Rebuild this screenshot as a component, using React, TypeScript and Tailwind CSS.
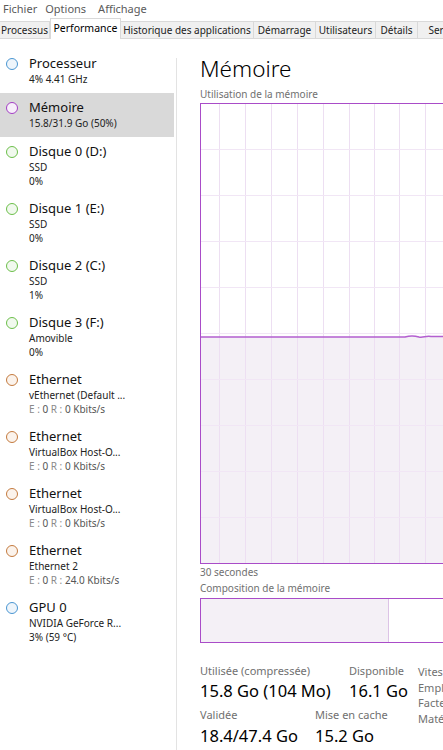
import React from "react"

type Item = { title: string, lines: React.ReactNode[], color: string, fill: string, selected?: boolean }

const Net = ({ e, r }: { e: string, r: string }) => (
    <span>
        <span className="text-[#8a8a8a]">E : </span><span className="text-[#555]">{e} </span>
        <span className="text-[#8a8a8a]">R : </span><span className="text-[#555]">{r}</span>
    </span>
)

const items: Item[] = [
    { title: "Processeur", lines: ["4% 4.41 GHz"], color: "#4a96d2", fill: "#eef5fb" },
    { title: "Mémoire", lines: ["15.8/31.9 Go (50%)"], color: "#a33fc4", fill: "#f7eefa", selected: true },
    { title: "Disque 0 (D:)", lines: ["SSD", "0%"], color: "#6cbf4a", fill: "#f1f9ee" },
    { title: "Disque 1 (E:)", lines: ["SSD", "0%"], color: "#6cbf4a", fill: "#f1f9ee" },
    { title: "Disque 2 (C:)", lines: ["SSD", "1%"], color: "#6cbf4a", fill: "#f1f9ee" },
    { title: "Disque 3 (F:)", lines: ["Amovible", "0%"], color: "#6cbf4a", fill: "#f1f9ee" },
    { title: "Ethernet", lines: ["vEthernet (Default ...", <Net e="0" r="0 Kbits/s" />], color: "#c47a3e", fill: "#fbf3ec" },
    { title: "Ethernet", lines: ["VirtualBox Host-O...", <Net e="0" r="0 Kbits/s" />], color: "#c47a3e", fill: "#fbf3ec" },
    { title: "Ethernet", lines: ["VirtualBox Host-O...", <Net e="0" r="0 Kbits/s" />], color: "#c47a3e", fill: "#fbf3ec" },
    { title: "Ethernet", lines: ["Ethernet 2", <Net e="0" r="24.0 Kbits/s" />], color: "#c47a3e", fill: "#fbf3ec" },
    { title: "GPU 0", lines: ["NVIDIA GeForce R...", "3% (59 °C)"], color: "#4a96d2", fill: "#eef5fb" },
]

const tabs = [
    { label: "Processus", w: "w-[50px]" },
    { label: "Performance", w: "w-[71px]", active: true },
    { label: "Historique des applications", w: "w-[133px]" },
    { label: "Démarrage", w: "w-[62px]" },
    { label: "Utilisateurs", w: "w-[60px]" },
    { label: "Détails", w: "w-[42px]" },
    { label: "Services", w: "w-[60px]" },
]

const Graph = () => {
    const vx = [19, 45, 71, 97, 123, 149, 174, 199, 225, 251]
    const hy = [46, 92, 138, 184, 230, 276, 322, 368, 414]
    return (
        <svg width="270" height="461" className="block">
            <rect x="0" y="234" width="270" height="227" fill="#f4f0f6" />
            {vx.map(x => <line key={x} x1={x + 0.5} y1="0" x2={x + 0.5} y2="461" stroke="#eddff2" strokeWidth="1" />)}
            {hy.map(y => <line key={y} x1="0" y1={y + 0.5} x2="270" y2={y + 0.5} stroke="#f1e6f5" strokeWidth="1" />)}
            <path d="M0 234 L205 234 C210 232.5 214 232.5 219 234 C223 235 226 232.5 231 233.5 L270 233.5" fill="none" stroke="#b35fd0" strokeWidth="1.5" />
            <rect x="0.5" y="0.5" width="300" height="460" fill="none" stroke="#a94cc8" strokeWidth="1" />
        </svg>
    )
}

export default function App() {
    return (
        <div className="w-[443px] h-[750px] overflow-hidden bg-white text-black" style={{ fontFamily: '"Noto Sans", "Open Sans", sans-serif' }}>
            <div className="h-[18px] flex items-center gap-[8px] pl-[3px] text-[11px] text-[#5a5a5a]">
                <span>Fichier</span>
                <span>Options</span>
                <span className="ml-[4px]">Affichage</span>
            </div>
            <div className="h-[21px] flex items-end border-b border-[#d9d9d9] whitespace-nowrap">
                {tabs.map(t => t.active ? (
                    <div key={t.label} className={`${t.w} shrink-0 h-[21px] -mb-px bg-white border border-b-0 border-[#d9d9d9] flex items-center justify-center text-[10.5px] text-black`}>{t.label}</div>
                ) : (
                    <div key={t.label} className={`${t.w} shrink-0 h-[17px] bg-[#f0f0f0] border border-b-0 border-l-0 border-[#d9d9d9] flex items-center justify-center text-[10px] text-[#222]`}>{t.label}</div>
                ))}
            </div>
            <div className="flex">
                <div className="w-[176px] shrink-0 pt-[10px]">
                    {items.map((it, i) => (
                        <div key={i} className={`flex pl-[6px] pt-[6px] ${it.lines.length === 1 ? "h-[44px]" : "h-[57px]"} w-[174px] ${it.selected ? "bg-[#d9d9d9]" : ""}`}>
                            <div className="h-[17px] flex items-center">
                                <div className="w-[12px] h-[12px] rounded-full border-[1.5px]" style={{ borderColor: it.color, background: it.fill }} />
                            </div>
                            <div className="ml-[11px] whitespace-nowrap">
                                <div className="text-[13px] leading-[17px] text-[#111]">{it.title}</div>
                                {it.lines.map((l, j) => (
                                    <div key={j} className="text-[10px] leading-[14px] text-[#222]">{l}</div>
                                ))}
                            </div>
                        </div>
                    ))}
                </div>
                <div className="w-px bg-[#e3e3e3] mt-[19px] h-[700px] shrink-0" />
                <div className="pl-[23px] flex-1 overflow-hidden">
                    <div className="text-[22.5px] leading-[30px] mt-[15px] text-black font-light">Mémoire</div>
                    <div className="text-[10px] leading-[14px] text-[#707070] mt-[3px] whitespace-nowrap">Utilisation de la mémoire</div>
                    <div className="mt-[2px]"><Graph /></div>
                    <div className="text-[10px] leading-[14px] text-[#707070] mt-[1px]">30 secondes</div>
                    <div className="text-[10px] leading-[14px] text-[#707070] mt-[2px] whitespace-nowrap">Composition de la mémoire</div>
                    <div className="mt-[3px] w-[300px] h-[45px] border border-[#a94cc8] flex">
                        <div className="w-[188px] h-full bg-[#f4f0f6] border-r border-[#dcc3e6]" />
                    </div>
                    <div className="flex mt-[21px] whitespace-nowrap">
                        <div className="w-[218px] shrink-0">
                            <div className="flex">
                                <div className="w-[149px] shrink-0">
                                    <div className="text-[11px] leading-[14px] text-[#707070]">Utilisée (compressée)</div>
                                    <div className="text-[16.5px] leading-[26px] text-black">15.8 Go (104 Mo)</div>
                                </div>
                                <div>
                                    <div className="text-[11px] leading-[14px] text-[#707070]">Disponible</div>
                                    <div className="text-[16.5px] leading-[26px] text-black">16.1 Go</div>
                                </div>
                            </div>
                            <div className="flex mt-[4px]">
                                <div className="w-[115px] shrink-0">
                                    <div className="text-[11px] leading-[14px] text-[#707070]">Validée</div>
                                    <div className="text-[16.5px] leading-[28px] text-black">18.4/47.4 Go</div>
                                </div>
                                <div>
                                    <div className="text-[11px] leading-[14px] text-[#707070]">Mise en cache</div>
                                    <div className="text-[16.5px] leading-[28px] text-black">15.2 Go</div>
                                </div>
                            </div>
                        </div>
                        <div className="text-[11px] leading-[15.7px] text-[#707070]">
                            <div>Vitesse :</div>
                            <div>Emplacements utilisés :</div>
                            <div>Facteur de forme :</div>
                            <div>Matériel réservé :</div>
                        </div>
                    </div>
                </div>
            </div>
        </div>
    )
}
